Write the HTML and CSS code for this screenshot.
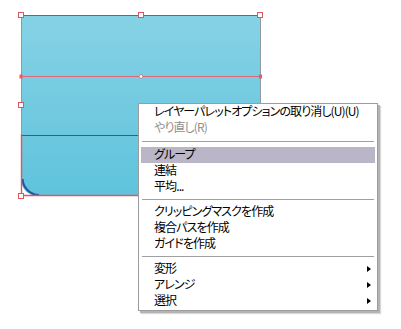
FILE: index.html
```html
<!DOCTYPE html>
<html lang="ja">
<head>
<meta charset="utf-8">
<link rel="stylesheet" href="styles.css">
</head>
<body>
<div class="stage">
  <svg class="canvas" width="401" height="329" viewBox="0 0 401 329">
    <defs>
      <linearGradient id="fill" x1="0" y1="15" x2="0" y2="196" gradientUnits="userSpaceOnUse">
        <stop offset="0" stop-color="#86d2e5"/>
        <stop offset="1" stop-color="#5fc3dc"/>
      </linearGradient>
    </defs>
    <!-- upper rect -->
    <rect x="21" y="15" width="239" height="120" fill="url(#fill)"/>
    <!-- lower rounded part -->
    <path d="M21 135 H260 V196 H37.5 A16.5 16.5 0 0 1 21 179.5 Z" fill="url(#fill)"/>
    <!-- edges -->
    <line x1="21" y1="15.5" x2="260" y2="15.5" stroke="#2e7fa0" stroke-width="1"/>
    <line x1="21.5" y1="15" x2="21.5" y2="135" stroke="#8e9aa0" stroke-width="1"/>
    <line x1="260.5" y1="15" x2="260.5" y2="196" stroke="#8e9aa0" stroke-width="1"/>
    <line x1="21" y1="135.5" x2="260" y2="135.5" stroke="#1f62a8" stroke-width="1"/>
    <path d="M22.5 179 A17 17 0 0 0 39 195" fill="none" stroke="#2456a6" stroke-width="2.2"/>
    <!-- selection -->
    <line x1="21.5" y1="134" x2="21.5" y2="196" stroke="#e8505a" stroke-width="1.4"/>
    <line x1="21" y1="195.5" x2="260" y2="195.5" stroke="#e8505a" stroke-width="1.4"/>
    <line x1="21" y1="76.5" x2="261" y2="76.5" stroke="#e06878" stroke-width="1"/>
    <rect x="19.5" y="74.5" width="3" height="4" fill="#e85a66"/>
    <rect x="259" y="74.5" width="3" height="4" fill="#e85a66"/>
    <circle cx="141" cy="76.5" r="1.8" fill="#fff" stroke="#e06878" stroke-width="0.8"/>
    <!-- handles -->
    <g fill="#fff" stroke="#e05460" stroke-width="1">
      <rect x="18.5" y="12.5" width="5" height="5"/>
      <rect x="138.5" y="12.5" width="5" height="5"/>
      <rect x="257.5" y="12.5" width="5" height="5"/>
      <rect x="18.5" y="102.5" width="5" height="5"/>
      <rect x="18.5" y="193.5" width="5" height="5"/>
    </g>
  </svg>

  <div class="menu">
    <div class="item">レイヤーパレットオプションの取り消し(U)(U)</div>
    <div class="item disabled">やり直し(R)</div>
    <div class="sep first"></div>
    <div class="item active">グループ</div>
    <div class="item">連結</div>
    <div class="item">平均...</div>
    <div class="sep"></div>
    <div class="item">クリッピングマスクを作成</div>
    <div class="item">複合パスを作成</div>
    <div class="item">ガイドを作成</div>
    <div class="sep"></div>
    <div class="item sub">変形</div>
    <div class="item sub">アレンジ</div>
    <div class="item sub">選択</div>
  </div>
</div>
</body>
</html>
```

FILE: styles.css
```css
html, body {
  margin: 0;
  padding: 0;
  background: #ffffff;
}

.stage {
  position: relative;
  width: 401px;
  height: 329px;
  overflow: hidden;
}

.canvas {
  display: block;
}

.menu {
  position: absolute;
  left: 138px;
  top: 103px;
  width: 234px;
  padding: 0 2px 1px 2px;
  background: #ffffff;
  border: 1px solid #9c9c9c;
  box-shadow: 2px 2px 0 #b4b4b4, 3px 3px 1px #d8d8d8;
  font-family: "Noto Sans CJK JP", "Noto Sans", sans-serif;
  font-size: 12px;
  letter-spacing: -0.9px;
  font-feature-settings: "palt";
  color: #000000;
}

.item {
  position: relative;
  height: 16px;
  line-height: 14px;
  padding-left: 13px;
  white-space: nowrap;
}

.item.disabled {
  color: #8e8e8e;
}

.item.active {
  background: #bab6c7;
}

.item.sub::after {
  content: "";
  position: absolute;
  right: 4px;
  top: 5px;
  border-left: 4px solid #000;
  border-top: 3.5px solid transparent;
  border-bottom: 3.5px solid transparent;
}

.sep {
  height: 1px;
  margin: 4px 1px;
  background: #a0a0a0;
}

.sep.first {
  margin: 5px 1px 5px 1px;
}
```
